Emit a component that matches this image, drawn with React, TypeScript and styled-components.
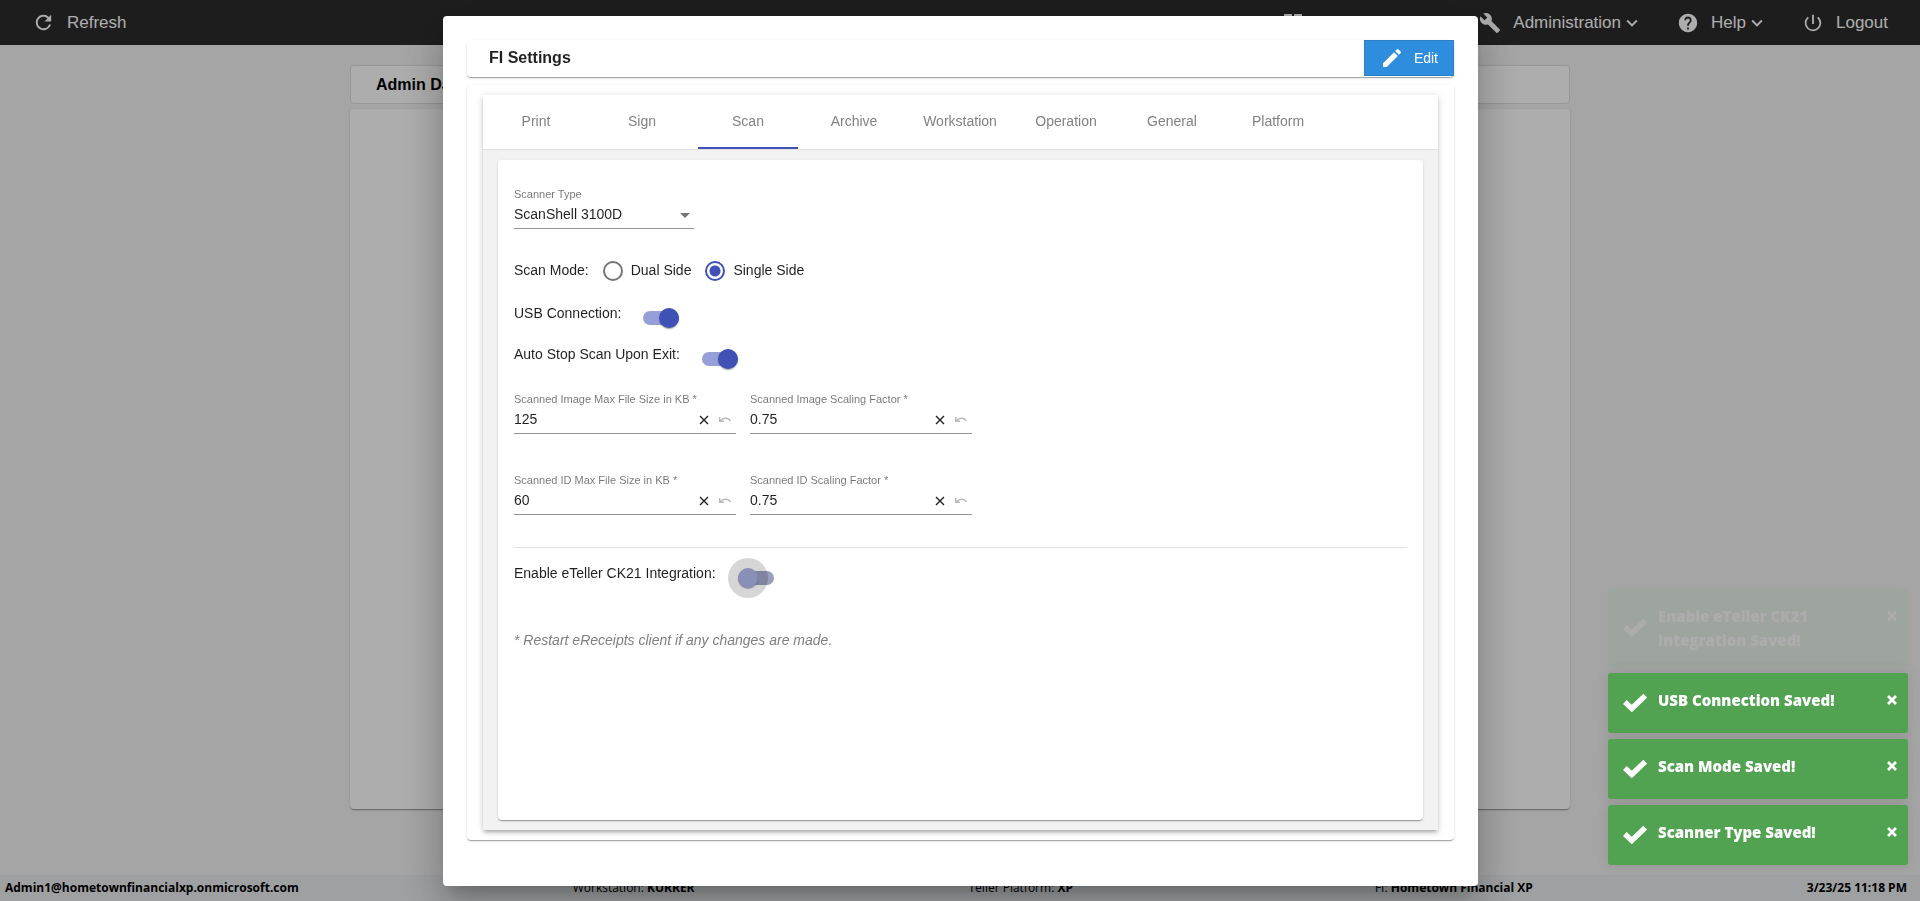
import React from "react";
import styled, { createGlobalStyle, css } from "styled-components";
import {
  MdRefresh, MdBuild, MdHelp, MdPowerSettingsNew, MdEdit, MdKeyboardArrowDown, MdDashboard,
} from "react-icons/md";

const ui = `"Liberation Sans", Arial, sans-serif`;
const humanist = `"Open Sans", "Noto Sans", sans-serif`;
const cardShadow = css`
  box-shadow: 0 2px 1px -1px rgba(0, 0, 0, 0.2), 0 1px 1px 0 rgba(0, 0, 0, 0.14),
    0 1px 3px 0 rgba(0, 0, 0, 0.12);
`;

const Global = createGlobalStyle`
  *, *::before, *::after { box-sizing: border-box; }
  body { margin: 0; background: #f3f3f3; font-family: ${ui}; font-size: 14px; color: rgba(0,0,0,.87); }
  button, input, select { font: inherit; color: inherit; }
  button { border: 0; background: none; padding: 0; cursor: pointer; }
`;

const Page = styled.div`
  display: flex;
  flex-direction: column;
  min-height: 100vh;
`;
const TopBar = styled.header`
  display: flex;
  align-items: center;
  gap: 34px;
  height: 45px;
  padding: 0 32px;
  background: #2c2c2c;
  color: #fff;
`;
const NavButton = styled.button<{ $after?: string }>`
  display: flex;
  align-items: center;
  gap: 12px;
  margin-right: ${(p) => p.$after ?? 0};
  font-size: 17px;
  line-height: 24px;
  white-space: nowrap;
`;
const Label = styled.span`
  display: flex;
  align-items: center;
`;
const Main = styled.main`
  display: flex;
  flex-direction: column;
  gap: 5px;
  flex: 1;
  width: 1220px;
  max-width: 100%;
  margin: 0 auto;
  padding: 20px 0 66px;
`;
const PageTitle = styled.h1`
  margin: 0;
  padding: 1px 25px 0;
  border: 1px solid #dedede;
  border-radius: 4px;
  background: #fff;
  color: #000;
  font-size: 16px;
  line-height: 36px;
`;
const PagePanel = styled.section`
  flex: 1;
  border-radius: 4px;
  background: #fff;
  ${cardShadow}
`;
const Footer = styled.footer`
  display: flex;
  justify-content: space-between;
  padding: 0 13px 0 5px;
  background: #e9ecef;
  color: #000;
  font-family: ${humanist};
  font-size: 12px;
  line-height: 26px;
`;
const Platform = styled.span`
  padding-right: 28px;
`;

const Backdrop = styled.div`
  position: fixed;
  inset: 0;
  display: flex;
  justify-content: center;
  padding: 16px 0 15px 1px;
  background: rgba(0, 0, 0, 0.32);
`;
const Dialog = styled.div`
  display: flex;
  flex-direction: column;
  gap: 8px;
  width: 1035px;
  max-width: 100%;
  padding: 24px 24px 46px;
  border-radius: 4px;
  background: #fff;
  box-shadow: 0 11px 15px -7px rgba(0, 0, 0, 0.2), 0 24px 38px 3px rgba(0, 0, 0, 0.14),
    0 9px 46px 8px rgba(0, 0, 0, 0.12);
`;
const DialogHead = styled.header`
  display: flex;
  justify-content: space-between;
  align-items: flex-start;
  height: 37px;
  padding-left: 22px;
  border-radius: 4px;
  ${cardShadow}
`;
const DialogTitle = styled.h2`
  margin: 0;
  font-size: 16px;
  line-height: 36px;
`;
const EditButton = styled.button`
  display: flex;
  align-items: center;
  gap: 10px;
  height: 36px;
  padding: 0 15px;
  border: 1px solid #2a7fc6;
  background: #2f8ddd;
  color: #fff;
`;
const DialogBody = styled.div`
  display: flex;
  flex: 1;
  padding: 10px 16px;
  border-radius: 4px;
  ${cardShadow}
`;
const Tabbed = styled.div`
  display: flex;
  flex-direction: column;
  flex: 1;
  background: #f2f2f2;
  box-shadow: 0 3px 3px -2px rgba(0, 0, 0, 0.2), 0 3px 4px 0 rgba(0, 0, 0, 0.14),
    0 1px 8px 0 rgba(0, 0, 0, 0.12);
`;
const TabList = styled.div`
  display: flex;
  gap: 6px;
  height: 55px;
  padding: 0 3px;
  border-bottom: 1px solid #dfdfdf;
  background: #fff;
`;
const Tab = styled.button<{ $on: boolean }>`
  width: 100px;
  border-bottom: 2px solid ${(p) => (p.$on ? "#3f51b5" : "transparent")};
  color: #828282;
`;
const Panel = styled.form`
  display: flex;
  flex-direction: column;
  flex: 1;
  margin: 10px 15px;
  padding: 26px 16px;
  border-radius: 4px;
  background: #fff;
  ${cardShadow}
`;
const Field = styled.div<{ $w: number }>`
  display: flex;
  flex-direction: column;
  width: ${(p) => p.$w}px;
  border-bottom: 1px solid #949494;
`;
const FieldLabel = styled.label`
  color: rgba(0, 0, 0, 0.54);
  font-size: 11px;
  line-height: 16px;
`;
const FieldLine = styled.div`
  display: flex;
  align-items: center;
  height: 26px;
`;
const Select = styled.select`
  flex: 1;
  appearance: none;
  border: 0;
  padding: 0 0 2px;
  background: transparent;
  outline: 0;
`;
const Arrow = styled.span`
  margin-right: 4px;
  border: 5px solid transparent;
  border-top-color: rgba(0, 0, 0, 0.54);
  border-bottom: 0;
  pointer-events: none;
`;
const TextInput = styled.input`
  flex: 1;
  min-width: 0;
  border: 0;
  padding: 0 0 2px;
  background: transparent;
  outline: 0;
`;
const FieldButton = styled.button`
  display: flex;
  margin-right: 4px;
  margin-left: 5px;
  &:disabled { color: rgba(0, 0, 0, 0.28); }
`;
const FieldRow = styled.div<{ $top: number }>`
  display: flex;
  gap: 14px;
  margin-top: ${(p) => p.$top}px;
`;
const RadioRow = styled.fieldset`
  display: flex;
  align-items: center;
  gap: 14px;
  height: 20px;
  margin: 32px 0 0;
  padding: 0;
  border: 0;
  line-height: 16px;
`;
const RadioText = styled.span`
  padding-bottom: 2px;
`;
const RadioLabel = styled.label`
  display: flex;
  align-items: center;
  gap: 8px;
`;
const Radio = styled.input`
  appearance: none;
  width: 20px;
  height: 20px;
  margin: 0;
  border: 2px solid #757575;
  border-radius: 50%;
  &:checked {
    border-color: #3f51b5;
    background: radial-gradient(circle, #3f51b5 5px, transparent 6px);
  }
`;
const SwitchRow = styled.label<{ $top: number }>`
  display: flex;
  gap: 22px;
  height: 24px;
  margin-top: ${(p) => p.$top}px;
  line-height: 16px;
`;
const Switch = styled.input<{ $fading?: boolean }>`
  appearance: none;
  display: flex;
  align-items: center;
  width: 36px;
  height: 14px;
  margin: 6px 0 0;
  border-radius: 8px;
  background: ${(p) => (p.$fading ? "#999ebf" : "#9fa8da")};
  &::before {
    content: "";
    width: 20px;
    height: 20px;
    border-radius: 50%;
    background: #3f51b5;
    box-shadow: 0 2px 1px -1px rgba(0, 0, 0, 0.2), 0 1px 1px 0 rgba(0, 0, 0, 0.14),
      0 1px 3px 0 rgba(0, 0, 0, 0.12);
  }
  &:checked { justify-content: flex-end; background: #979fd8; }
  ${(p) =>
    p.$fading &&
    css`
      &::before {
        background: #8890b8;
        box-shadow: 0 1px 1px rgba(0, 0, 0, 0.3), 0 0 0 10px rgba(0, 0, 0, 0.16);
      }
    `}
`;
const Divider = styled.hr`
  width: 100%;
  height: 1px;
  margin: 32px 0 0;
  border: 0;
  background: #e0e0e0;
`;
const Note = styled.p`
  margin: 43px 0 0;
  color: #808080;
  font-style: italic;
  line-height: 16px;
`;

const Toasts = styled.aside`
  position: fixed;
  right: 12px;
  bottom: 36px;
  display: flex;
  flex-direction: column;
  gap: 6px;
  width: 300px;
`;
const ToastBox = styled.div<{ $faint?: boolean }>`
  display: flex;
  align-items: flex-start;
  gap: 11px;
  min-height: 60px;
  padding: 15px 11px 15px 15px;
  border-radius: 3px;
  background: #51a351;
  box-shadow: 0 0 12px rgba(80, 80, 80, 0.2);
  color: #fff;
  font-family: ${humanist};
  font-size: 15px;
  font-weight: 800;
  line-height: 24px;
  opacity: ${(p) => (p.$faint ? 0.08 : 1)};
  > svg { align-self: center; flex: none; }
`;
const ToastText = styled.span`
  flex: 1;
`;
const ToastClose = styled.button`
  display: flex;
  height: 24px;
  align-items: center;
`;

const CheckMark = () => (
  <svg width="24" height="20" viewBox="0 0 24 20" fill="none" stroke="#fff" strokeWidth="5.4">
    <path d="M1.8 9 8.8 15.5 22.2 2.7" />
  </svg>
);
const CrossBold = () => (
  <svg width="10" height="10" viewBox="0 0 10 10" fill="none" stroke="#fff" strokeWidth="2.8">
    <path d="M1 1 9 9M9 1 1 9" />
  </svg>
);
const CrossThin = () => (
  <svg width="10" height="10" viewBox="0 0 10 10" fill="none" stroke="currentColor" strokeWidth="1.4">
    <path d="M1 1 9 9M9 1 1 9" />
  </svg>
);
const UndoMark = () => (
  <svg width="14" height="8" viewBox="0 0 14 8" fill="none" stroke="currentColor" strokeWidth="1.4">
    <path d="M1.7 1V5.3H6M2.4 4.8C5 1.4 10 1.2 12.4 5" />
  </svg>
);

const tabs = ["Print", "Sign", "Scan", "Archive", "Workstation", "Operation", "General", "Platform"];

function NumberField({ id, label, value }: { id: string; label: string; value: string }) {
  return (
    <Field $w={222}>
      <FieldLabel htmlFor={id}>{label} *</FieldLabel>
      <FieldLine>
        <TextInput id={id} defaultValue={value} />
        <FieldButton type="button" aria-label="Clear"><CrossThin /></FieldButton>
        <FieldButton type="button" aria-label="Undo" disabled><UndoMark /></FieldButton>
      </FieldLine>
    </Field>
  );
}

function Toggle({ top, label, on, fading }: { top: number; label: string; on?: boolean; fading?: boolean }) {
  return (
    <SwitchRow $top={top}>
      {label}
      <Switch type="checkbox" role="switch" defaultChecked={on} $fading={fading} />
    </SwitchRow>
  );
}

function Toast({ text, faint }: { text: string; faint?: boolean }) {
  return (
    <ToastBox $faint={faint} role="status">
      <CheckMark />
      <ToastText>{text}</ToastText>
      <ToastClose aria-label="Close"><CrossBold /></ToastClose>
    </ToastBox>
  );
}

export default function App() {
  return (
    <>
      <Global />
      <Page>
        <TopBar>
          <NavButton $after="auto"><MdRefresh size={23} />Refresh</NavButton>
          <NavButton $after="140px" aria-label="Dashboard"><MdDashboard size={24} /></NavButton>
          <NavButton><MdBuild size={22} /><Label>Administration<MdKeyboardArrowDown size={22} /></Label></NavButton>
          <NavButton><MdHelp size={22} /><Label>Help<MdKeyboardArrowDown size={22} /></Label></NavButton>
          <NavButton><MdPowerSettingsNew size={22} />Logout</NavButton>
        </TopBar>
        <Main>
          <PageTitle>Admin Dashboard</PageTitle>
          <PagePanel />
        </Main>
        <Footer>
          <b>Admin1@hometownfinancialxp.onmicrosoft.com</b>
          <span>Workstation: <b>KURRER</b></span>
          <Platform>Teller Platform: <b>XP</b></Platform>
          <span>FI: <b>Hometown Financial XP</b></span>
          <b>3/23/25 11:18 PM</b>
        </Footer>
      </Page>
      <Backdrop>
        <Dialog role="dialog" aria-labelledby="dialog-title">
          <DialogHead>
            <DialogTitle id="dialog-title">FI Settings</DialogTitle>
            <EditButton><MdEdit size={24} />Edit</EditButton>
          </DialogHead>
          <DialogBody>
            <Tabbed>
              <TabList role="tablist">
                {tabs.map((t) => (
                  <Tab key={t} role="tab" aria-selected={t === "Scan"} $on={t === "Scan"}>{t}</Tab>
                ))}
              </TabList>
              <Panel>
                <Field $w={180}>
                  <FieldLabel htmlFor="scanner">Scanner Type</FieldLabel>
                  <FieldLine>
                    <Select id="scanner"><option>ScanShell 3100D</option></Select>
                    <Arrow />
                  </FieldLine>
                </Field>
                <RadioRow>
                  <RadioText>Scan Mode:</RadioText>
                  <RadioLabel><Radio type="radio" name="mode" /><RadioText>Dual Side</RadioText></RadioLabel>
                  <RadioLabel><Radio type="radio" name="mode" defaultChecked /><RadioText>Single Side</RadioText></RadioLabel>
                </RadioRow>
                <Toggle top={24} label="USB Connection:" on />
                <Toggle top={17} label="Auto Stop Scan Upon Exit:" on />
                <FieldRow $top={21}>
                  <NumberField id="image-size" label="Scanned Image Max File Size in KB" value="125" />
                  <NumberField id="image-scale" label="Scanned Image Scaling Factor" value="0.75" />
                </FieldRow>
                <FieldRow $top={38}>
                  <NumberField id="id-size" label="Scanned ID Max File Size in KB" value="60" />
                  <NumberField id="id-scale" label="Scanned ID Scaling Factor" value="0.75" />
                </FieldRow>
                <Divider />
                <Toggle top={17} label="Enable eTeller CK21 Integration:" fading />
                <Note>* Restart eReceipts client if any changes are made.</Note>
              </Panel>
            </Tabbed>
          </DialogBody>
        </Dialog>
      </Backdrop>
      <Toasts>
        <Toast text="Enable eTeller CK21 Integration Saved!" faint />
        <Toast text="USB Connection Saved!" />
        <Toast text="Scan Mode Saved!" />
        <Toast text="Scanner Type Saved!" />
      </Toasts>
    </>
  );
}
